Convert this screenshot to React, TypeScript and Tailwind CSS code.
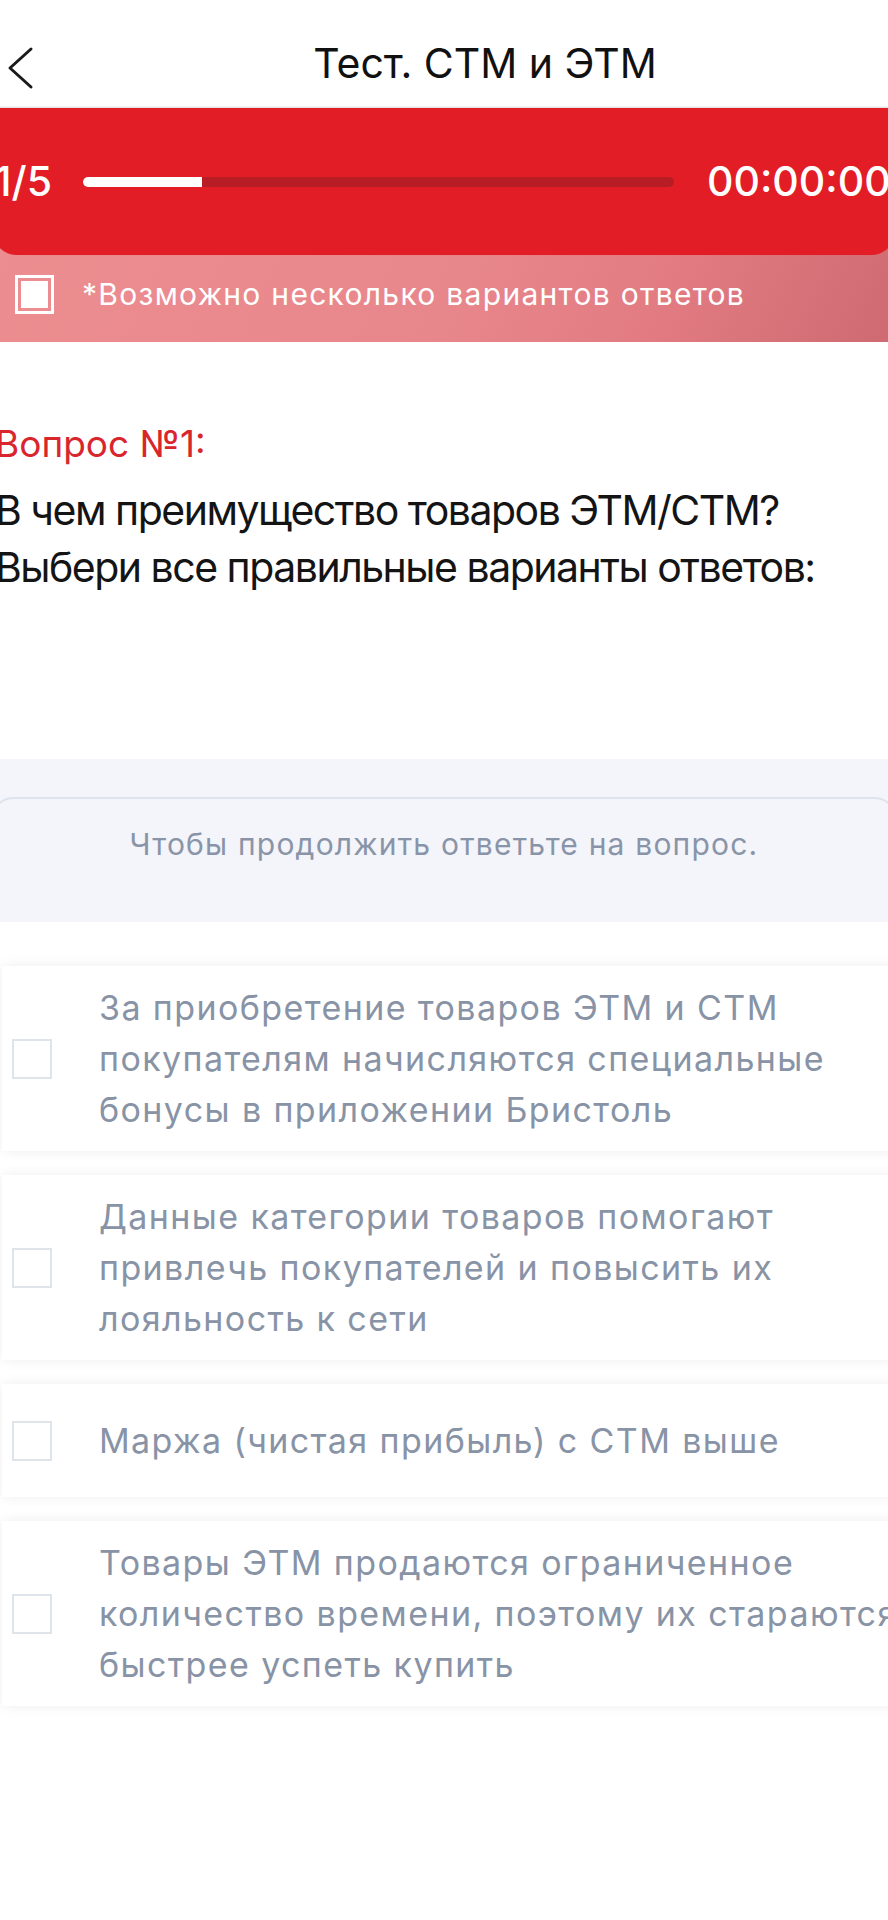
import { useState } from 'react';

const options: string[][] = [
  ['За приобретение товаров ЭТМ и СТМ', 'покупателям начисляются специальные', 'бонусы в приложении Бристоль'],
  ['Данные категории товаров помогают', 'привлечь покупателей и повысить их', 'лояльность к сети'],
  ['Маржа (чистая прибыль) с СТМ выше'],
  ['Товары ЭТМ продаются ограниченное', 'количество времени, поэтому их стараются', 'быстрее успеть купить'],
];

function OptionCard({ lines, checked, onToggle }: { lines: string[]; checked: boolean; onToggle: () => void }) {
  return (
    <button
      onClick={onToggle}
      className="ml-[2px] flex min-h-[113px] w-[980px] items-center bg-white py-[16px] pl-[10px] text-left shadow-[0_0_12px_rgba(0,0,0,0.07)]"
    >
      <span
        className={`h-[40px] w-[40px] shrink-0 border-2 ${checked ? 'border-[#e31d25] bg-[#e31d25]' : 'border-[#dfe3ea] bg-white'}`}
      />
      <span className="ml-[47px] text-[34px] leading-[51px] tracking-[1.4px] text-[#8893a6]">
        {lines.map((l) => (
          <span key={l} className="block whitespace-nowrap">
            {l}
          </span>
        ))}
      </span>
    </button>
  );
}

export default function App() {
  const [picked, setPicked] = useState<boolean[]>([false, false, false, false]);

  return (
    <div className="h-[1920px] w-[888px] overflow-hidden bg-white font-[family-name:Inter,sans-serif]">
      {/* Top bar */}
      <div className="flex h-[108px] w-[970px] items-start pt-[43px]">
        <div className="w-[60px] shrink-0">
          <svg width="40" height="44" viewBox="0 0 40 44" className="mt-[3px]">
            <path d="M31 3 L10 22 L31 41" fill="none" stroke="#1a1a1a" strokeWidth="3" strokeLinecap="round" strokeLinejoin="round" />
          </svg>
        </div>
        <h1 className="flex-1 text-center text-[41px] leading-[41px] text-[#111]">Тест. СТМ и ЭТМ</h1>
        <div className="w-[60px] shrink-0" />
      </div>

      {/* Progress + hint */}
      <div className="bg-[linear-gradient(115deg,#ec8e91_0%,#ea898d_40%,#e7868b_55%,#e27c82_75%,#d06a72_100%)]">
        <div className="-mx-[6px] flex h-[147px] items-center rounded-b-[22px] bg-[#e31d25] pl-[6px] shadow-[0_-1px_2px_rgba(0,0,0,0.15)]">
          <span className="-ml-[10px] w-[62px] shrink-0 text-right text-[41px] font-medium leading-[41px] text-white">1/5</span>
          <div className="ml-[31px] h-[10px] w-[591px] shrink-0 rounded-full bg-[#b81c24]">
            <div className="h-[10px] w-[119px] rounded-l-full bg-white" />
          </div>
          <span className="ml-[33px] whitespace-nowrap text-[41px] font-medium leading-[41px] text-white">00:00:00</span>
        </div>
        <div className="flex h-[87px] items-center pb-[9px] pl-[15px]">
          <span className="h-[39px] w-[39px] shrink-0 border-[3px] border-white p-[3px]">
            <span className="block h-full w-full bg-white" />
          </span>
          <span className="ml-[28px] whitespace-nowrap text-[30px] leading-[30px] tracking-[1.3px] text-white">
            *Возможно несколько вариантов ответов
          </span>
        </div>
      </div>

      {/* Question */}
      <div className="-ml-[5px] mt-[83px]">
        <p className="text-[37px] leading-[37px] text-[#d9262d]">Вопрос №1:</p>
        <p className="mt-[20px] text-[41px] leading-[57px] tracking-[-1.5px] text-[#141414]">
          <span className="block whitespace-nowrap">В чем преимущество товаров ЭТМ/СТМ?</span>
          <span className="block whitespace-nowrap">Выбери все правильные варианты ответов:</span>
        </p>
      </div>

      {/* Hint panel */}
      <div className="mt-[163px] h-[163px] overflow-hidden bg-[#f3f5fa] pt-[38px]">
        <div className="-mx-[10px] h-[200px] rounded-[24px] border-2 border-[#dfe3ee] pt-[30px] text-center">
          <span className="text-[30px] leading-[30px] tracking-[1.2px] text-[#8a94a8]">Чтобы продолжить ответьте на вопрос.</span>
        </div>
      </div>

      {/* Options */}
      <div className="mt-[44px] flex flex-col gap-[24px]">
        {options.map((lines, i) => (
          <OptionCard
            key={i}
            lines={lines}
            checked={picked[i]}
            onToggle={() => setPicked((p) => p.map((v, j) => (j === i ? !v : v)))}
          />
        ))}
      </div>
    </div>
  );
}
